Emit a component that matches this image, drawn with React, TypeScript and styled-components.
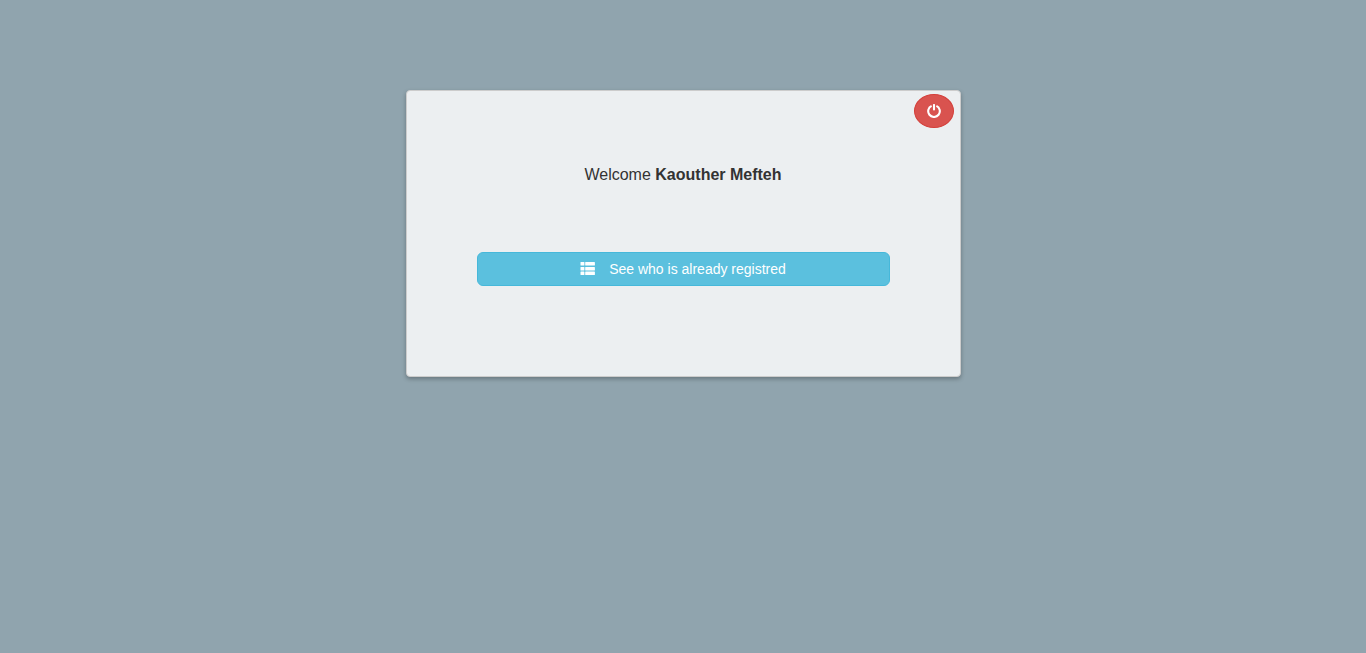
import React from "react";
import styled, { createGlobalStyle } from "styled-components";

const GlobalStyle = createGlobalStyle`
  *, *::before, *::after { box-sizing: border-box; }
  body {
    margin: 0;
    background: #90a4ae;
    color: #333;
    font-family: "Helvetica Neue", "Liberation Sans", Arial, sans-serif;
    font-size: 14px;
    line-height: 20px;
  }
`;

const Page = styled.main`
  display: flex;
  justify-content: center;
  padding: 90px 15px 20px;
`;

const Card = styled.section`
  width: 100%;
  max-width: 555px;
  background: #eceff1;
  border: 1px solid #ccc;
  border-radius: 4px;
  box-shadow: 0 2px 4px rgba(0, 0, 0, 0.28);
`;

const CardHeader = styled.header`
  display: flex;
  justify-content: flex-end;
  padding: 3px 6px;
`;

const CardBody = styled.div`
  display: flex;
  flex-direction: column;
  gap: 66px;
  padding: 33px 70px 90px;
`;

const Welcome = styled.p`
  margin: 0;
  font-size: 16px;
  line-height: 22px;
  text-align: center;
`;

const Button = styled.button<{ $tone: "info" | "danger"; $round?: boolean }>`
  display: flex;
  align-items: center;
  justify-content: center;
  gap: 14px;
  min-height: 34px;
  padding: 6px 12px;
  border: 1px solid ${(p) => (p.$tone === "info" ? "#46b8da" : "#d43f3a")};
  border-radius: ${(p) => (p.$round ? "50%" : "6px")};
  background: ${(p) => (p.$tone === "info" ? "#5bc0de" : "#d9534f")};
  color: #fff;
  font: inherit;
  cursor: pointer;

  svg {
    display: block;
    flex: none;
  }
`;

const PowerIcon = () => (
  <svg width="14" height="14" viewBox="0 0 14 14" fill="none" stroke="currentColor" strokeWidth="2.1" aria-hidden="true">
    <path d="M4.6 1.9A5.8 5.8 0 1 0 9.4 1.9" />
    <path d="M7 1V5.4" strokeLinecap="round" />
  </svg>
);

const ListIcon = () => (
  <svg width="15" height="14" viewBox="0 0 15 14" fill="currentColor" aria-hidden="true">
    <rect x="0.5" y="0" width="3.9" height="3.6" rx="0.5" />
    <rect x="5.2" y="0" width="9.7" height="3.6" rx="0.5" />
    <rect x="0.5" y="4.9" width="3.9" height="3.6" rx="0.5" />
    <rect x="5.2" y="4.9" width="9.7" height="3.6" rx="0.5" />
    <rect x="0.5" y="9.5" width="3.9" height="3.6" rx="0.5" />
    <rect x="5.2" y="9.5" width="9.7" height="3.6" rx="0.5" />
  </svg>
);

export default function App() {
  return (
    <>
      <GlobalStyle />
      <Page>
        <Card>
          <CardHeader>
            <Button type="button" $tone="danger" $round aria-label="Log out">
              <PowerIcon />
            </Button>
          </CardHeader>
          <CardBody>
            <Welcome>
              Welcome <strong>Kaouther Mefteh</strong>
            </Welcome>
            <Button type="button" $tone="info">
              <ListIcon />
              See who is already registred
            </Button>
          </CardBody>
        </Card>
      </Page>
    </>
  );
}
